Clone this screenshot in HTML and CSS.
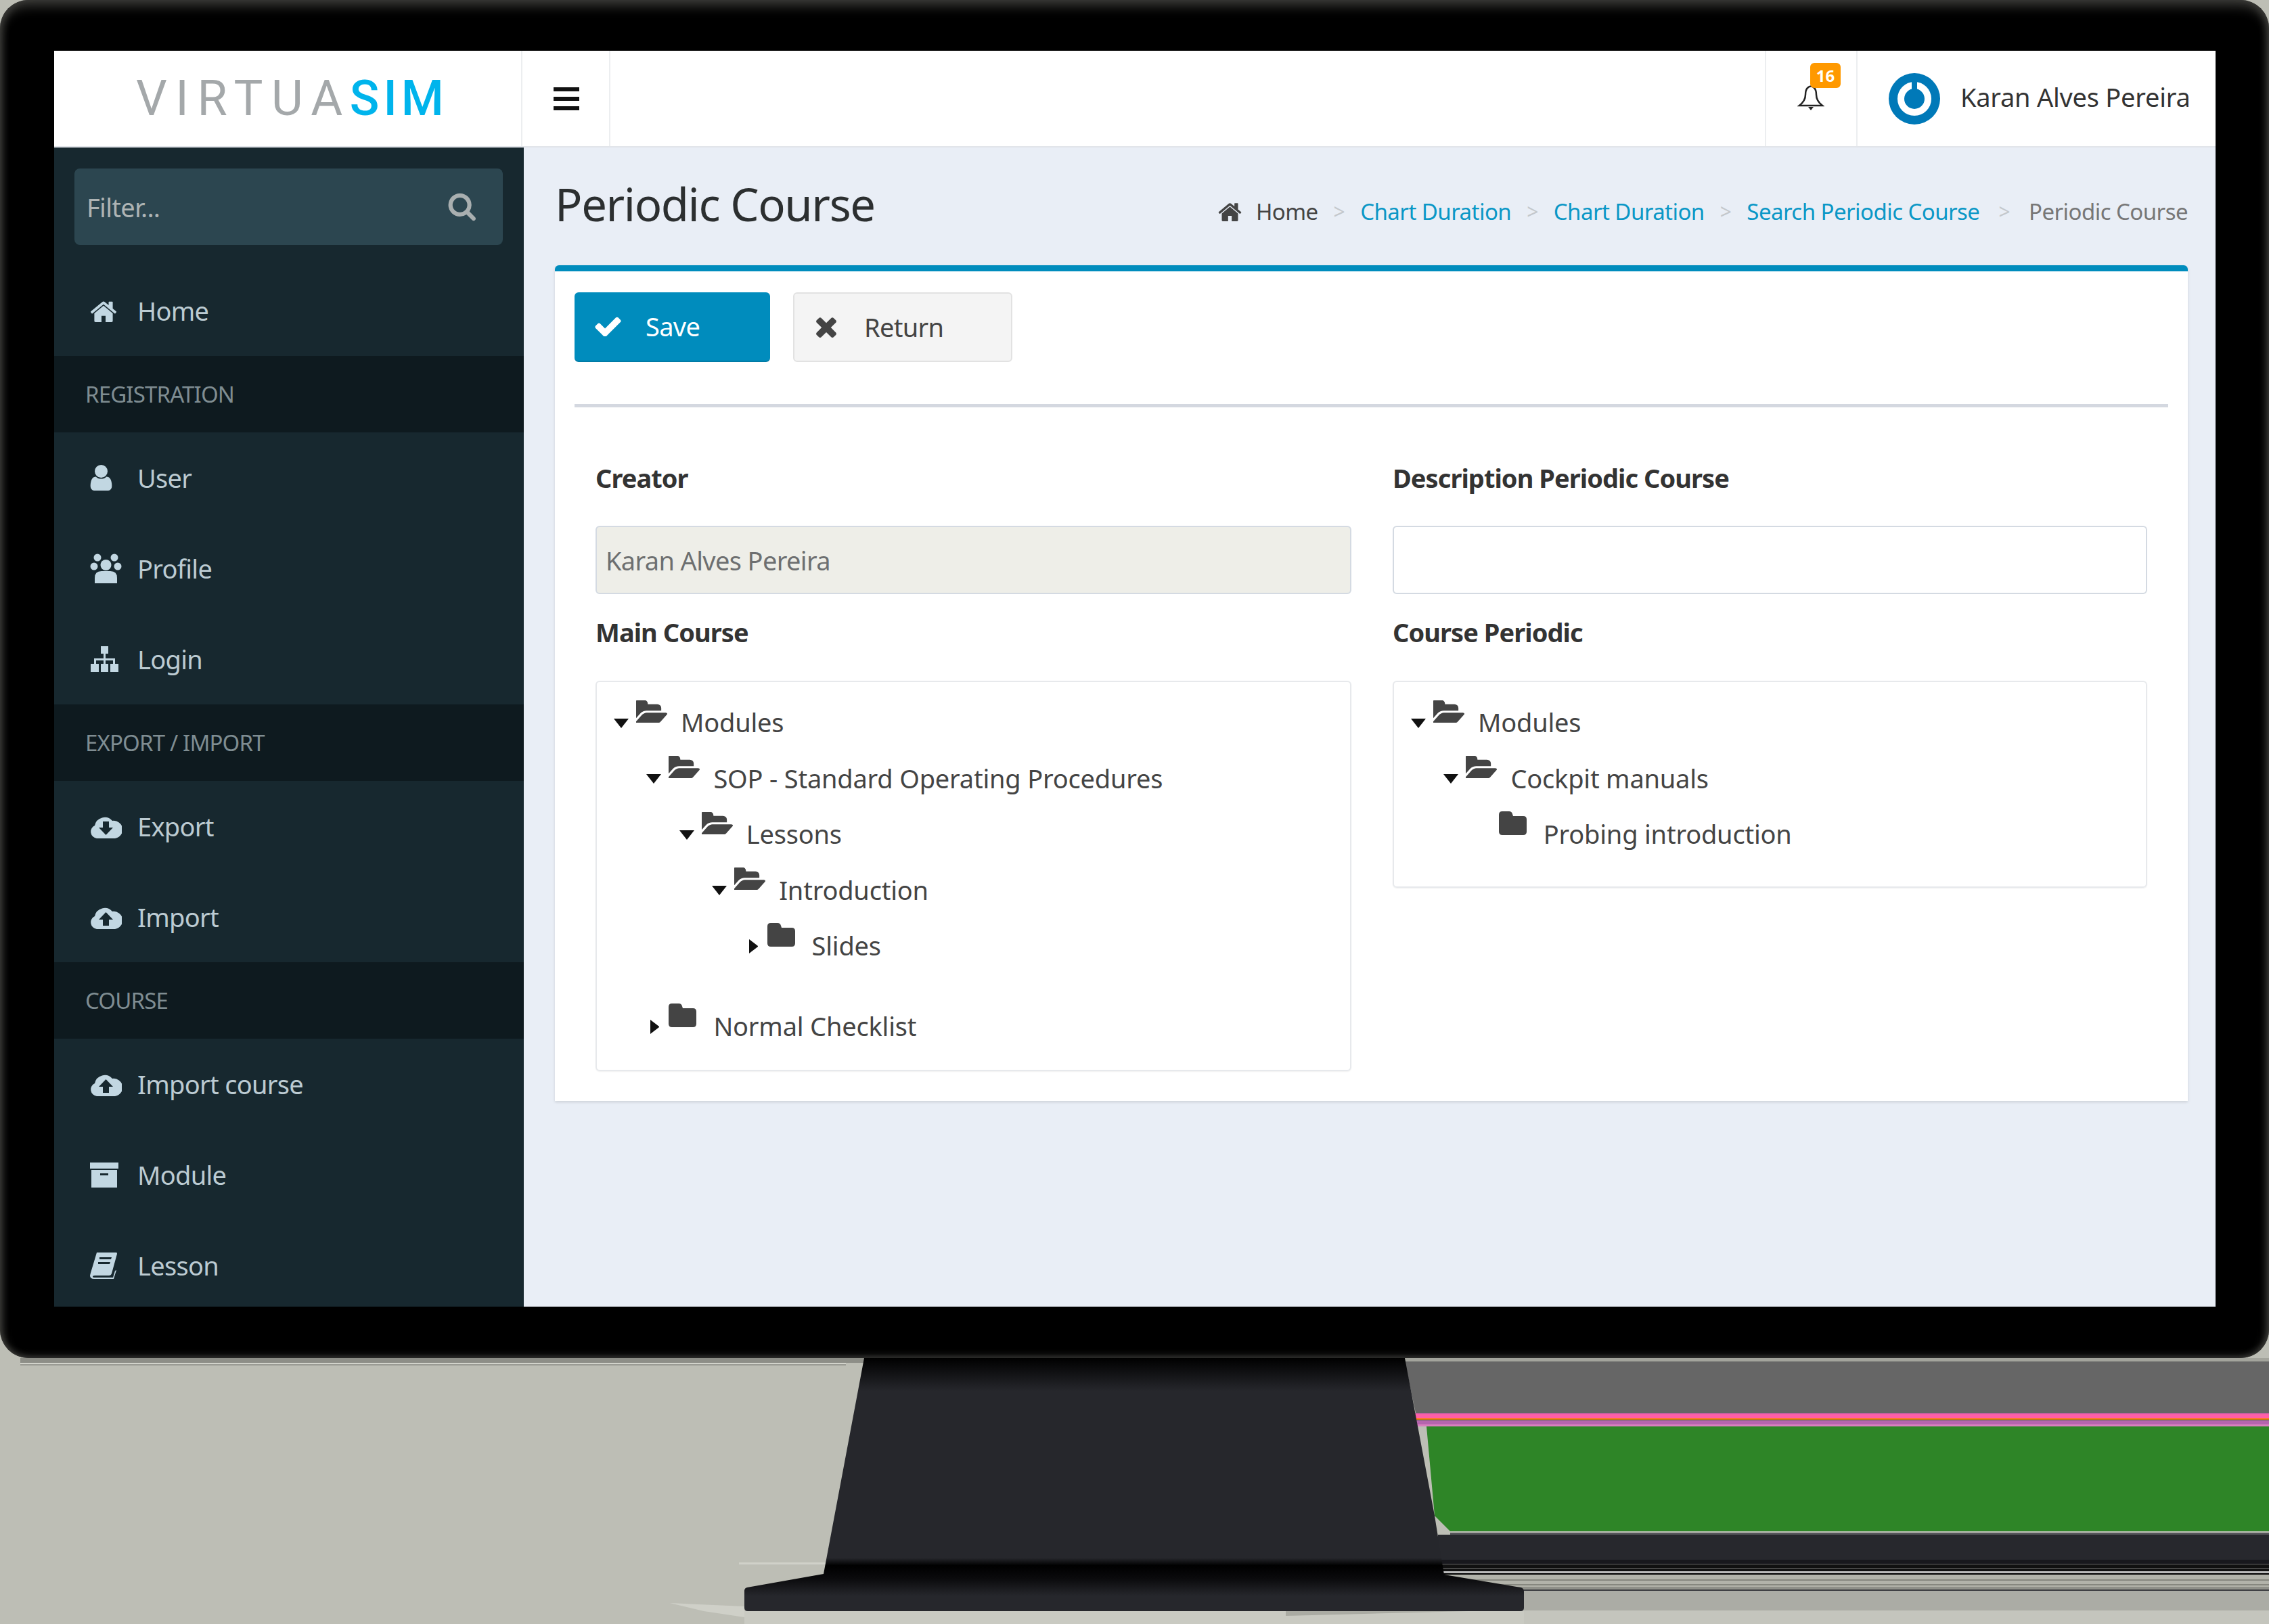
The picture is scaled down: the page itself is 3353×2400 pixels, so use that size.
FILE: index.html
```html
<!DOCTYPE html>
<html>
<head>
<meta charset="UTF-8">
<title>Periodic Course</title>
<link rel="stylesheet" href="styles.css">
</head>
<body>
<svg class="defs" width="0" height="0">
  <symbol id="i-home" viewBox="64 100 1664 1440"><path d="M1472 992v480q0 26-19 45t-45 19h-384v-384h-256v384h-384q-26 0-45-19t-19-45v-480q0-1 .5-3t.5-3l575-474 575 474q1 2 1 6zm223-69l-62 74q-8 9-21 11h-3q-13 0-21-7l-692-577-692 577q-12 8-24 7-13-2-21-11l-62-74q-8-10-7-23.5t11-21.5l719-599q32-26 76-26t76 26l244 204v-195q0-14 9-23t23-9h192q14 0 23 9t9 23v408l219 182q10 8 11 21.5t-7 23.5z"/></symbol>
  <symbol id="i-user" viewBox="256 128 1280 1536"><path d="M1536 1399q0 109-62.5 187t-150.5 78h-854q-88 0-150.5-78t-62.5-187q0-85 8.5-160.5t31.5-152 58.5-131 94-89 134.5-34.5q131 128 313 128t313-128q76 0 134.5 34.5t94 89 58.5 131 31.5 152 8.5 160.5zm-256-887q0 159-112.5 271.5t-271.5 112.5-271.5-112.5-112.5-271.5 112.5-271.5 271.5-112.5 271.5 112.5 112.5 271.5z"/></symbol>
  <symbol id="i-search" viewBox="0 128 1728 1664"><path d="M1216 832q0-185-131.5-316.5t-316.5-131.5-316.5 131.5-131.5 316.5 131.5 316.5 316.5 131.5 316.5-131.5 131.5-316.5zm512 832q0 52-38 90t-90 38q-54 0-90-38l-343-342q-179 124-399 124-143 0-273.5-55.5t-225-150-150-225-55.5-273.5 55.5-273.5 150-225 225-150 273.5-55.5 273.5 55.5 225 150 150 225 55.5 273.5q0 220-124 399l343 343q37 37 37 90z"/></symbol>
  <symbol id="i-check" viewBox="121 266 1550 1220"><path d="M1671 566q0 40-28 68l-724 724-136 136q-28 28-68 28t-68-28l-136-136-362-362q-28-28-28-68t28-68l136-136q28-28 68-28t68 28l294 295 656-657q28-28 68-28t68 28l136 136q28 28 28 68z"/></symbol>
  <symbol id="i-times" viewBox="302 238 1188 1316"><path d="M1490 1322q0 40-28 68l-136 136q-28 28-68 28t-68-28l-294-294-294 294q-28 28-68 28t-68-28l-136-136q-28-28-28-68t28-68l294-294-294-294q-28-28-28-68t28-68l136-136q28-28 68-28t68 28l294 294 294-294q28-28 68-28t68 28l136 136q28 28 28 68t-28 68l-294 294 294 294q28 28 28 68z"/></symbol>
  <symbol id="i-open" viewBox="64 128 1781 1344" preserveAspectRatio="none"><path d="M1845 931q0 35-35 74l-336 396q-43 51-120.5 86.5t-143.5 35.5h-1088q-34 0-60.5-13t-26.5-43q0-35 35-74l336-396q43-51 120.5-86.5t143.5-35.5h1088q34 0 60.5 13t26.5 43zm-343-345v160h-832q-94 0-197 47.5t-164 119.5l-337 396-5 6q0-4-.5-12.5t-.5-12.5v-960q0-92 66-158t158-66h320q92 0 158 66t66 158v32h544q92 0 158 66t66 158z"/></symbol>
  <symbol id="i-closed" viewBox="0 0 41 35"><path d="M5 0h10q4 0 5 4l1 3h15q5 0 5 5v18q0 5-5 5H5q-5 0-5-5V5q0-5 5-5z"/></symbol>
  <symbol id="i-group" viewBox="0 0 47 44"><circle cx="11" cy="6" r="5.5"/><circle cx="36" cy="6" r="5.5"/><circle cx="6" cy="19" r="5.5"/><circle cx="41" cy="19" r="5.5"/><circle cx="23.500" cy="17" r="8"/><path d="M7 44V36q0-10 10-10h13q10 0 10 10v8z"/></symbol>
  <symbol id="i-sitemap" viewBox="0 0 43 38"><path d="M16 0h11v11h-11zM20 11h3v7h14v8h-3v-5H23v5h-3v-5H9v5H6v-8h14zM1 26h12v12H1zM16 26h11v12H16zM30 26h12v12H30z"/></symbol>
  <symbol id="i-down" viewBox="0 0 47 35"><path fill-rule="evenodd" d="M10 35a10 10 0 0 1-3-19A15 15 0 0 1 33 9a11 11 0 0 1 4 26zM19 10v9h-6l10.500 11L34 19h-6v-9z"/></symbol>
  <symbol id="i-up" viewBox="0 0 47 35"><path fill-rule="evenodd" d="M10 35a10 10 0 0 1-3-19A15 15 0 0 1 33 9a11 11 0 0 1 4 26zM19 30v-9h-6L23.500 10 34 21h-6v9z"/></symbol>
  <symbol id="i-box" viewBox="0 0 42 37"><path fill-rule="evenodd" d="M0 0h42v9H0zM2 11h38v26H2zM15 16v3h12v-3z"/></symbol>
  <symbol id="i-book" viewBox="0 0 40 39"><path fill-rule="evenodd" d="M10 0h29q1 0 1 2l-8 29q-1 3-4 3H7q-3 0-3 1.500T7 37h27l3-10 2-1-4 13H6q-6 0-6-5l1-4zM14 7v3h17l1-3zM12 14v3h17l1-3z"/></symbol>
</svg>

<div class="monitor">
  <div class="screen">
    <header class="topbar">
      <div class="brand"><span class="logo-a">VIRTUA</span><span class="logo-b">SIM</span></div>
      <div class="toggle"><i></i><i></i><i></i></div>
      <div class="topbar-fill"></div>
      <div class="bell">
        <svg class="bell-ico" viewBox="0 0 40 40"><path d="M15 7q5-5 10 0 3 3 3 10 0 9 9 16H3q9-7 9-16 0-7 3-10z" fill="none" stroke="#222" stroke-width="2.500"/><path d="M16 35h8l-4 5z" fill="#222"/></svg>
        <span class="badge">16</span>
      </div>
      <div class="user">
        <svg class="avatar" viewBox="0 0 76 76"><circle cx="38" cy="38" r="38" fill="#0079b8"/><circle cx="38" cy="38" r="20" fill="none" stroke="#fff" stroke-width="10"/><rect x="34" y="10" width="8" height="28" fill="#0079b8"/></svg>
        <span class="user-name">Karan Alves Pereira</span>
      </div>
    </header>
    <div class="body">
      <nav class="sidebar">
        <div class="filter-wrap">
          <div class="filter">
            <input class="filter-input" placeholder="Filter...">
            <svg class="filter-ico"><use href="#i-search"/></svg>
          </div>
        </div>
        <a class="nav-item"><span class="nav-ico"><svg class="ico-home"><use href="#i-home"/></svg></span>Home</a>
        <div class="nav-head">REGISTRATION</div>
        <a class="nav-item"><span class="nav-ico"><svg class="ico-user"><use href="#i-user"/></svg></span>User</a>
        <a class="nav-item"><span class="nav-ico"><svg class="ico-group"><use href="#i-group"/></svg></span>Profile</a>
        <a class="nav-item"><span class="nav-ico"><svg class="ico-site"><use href="#i-sitemap"/></svg></span>Login</a>
        <div class="nav-head">EXPORT / IMPORT</div>
        <a class="nav-item"><span class="nav-ico"><svg class="ico-cloud"><use href="#i-down"/></svg></span>Export</a>
        <a class="nav-item"><span class="nav-ico"><svg class="ico-cloud"><use href="#i-up"/></svg></span>Import</a>
        <div class="nav-head">COURSE</div>
        <a class="nav-item"><span class="nav-ico"><svg class="ico-cloud"><use href="#i-up"/></svg></span>Import course</a>
        <a class="nav-item"><span class="nav-ico"><svg class="ico-box"><use href="#i-box"/></svg></span>Module</a>
        <a class="nav-item"><span class="nav-ico"><svg class="ico-book"><use href="#i-book"/></svg></span>Lesson</a>
      </nav>
      <main class="content">
        <div class="page-head">
          <h1 class="title">Periodic Course</h1>
          <ol class="crumbs">
            <li class="crumb-home"><svg class="crumb-ico"><use href="#i-home"/></svg>Home</li>
            <li class="sep">&gt;</li>
            <li class="link">Chart Duration</li>
            <li class="sep">&gt;</li>
            <li class="link">Chart Duration</li>
            <li class="sep">&gt;</li>
            <li class="link">Search Periodic Course</li>
            <li class="sep sep-last">&gt;</li>
            <li class="crumb-last">Periodic Course</li>
          </ol>
        </div>
        <section class="card">
          <div class="toolbar">
            <button class="btn btn-save"><svg class="btn-ico"><use href="#i-check"/></svg>Save</button>
            <button class="btn btn-return"><svg class="btn-ico-x"><use href="#i-times"/></svg>Return</button>
          </div>
          <div class="divider"></div>
          <div class="form">
            <div class="col">
              <label class="label">Creator</label>
              <input class="field field-off" value="Karan Alves Pereira" readonly>
              <label class="label label-2">Main Course</label>
              <div class="tree">
                <ul>
                  <li><div class="row"><span class="caret-down"></span><svg class="fold"><use href="#i-open"/></svg>Modules</div>
                    <ul>
                      <li><div class="row"><span class="caret-down"></span><svg class="fold"><use href="#i-open"/></svg>SOP - Standard Operating Procedures</div>
                        <ul>
                          <li><div class="row"><span class="caret-down"></span><svg class="fold"><use href="#i-open"/></svg>Lessons</div>
                            <ul>
                              <li><div class="row"><span class="caret-down"></span><svg class="fold"><use href="#i-open"/></svg>Introduction</div>
                                <ul>
                                  <li><div class="row"><span class="caret-right"></span><svg class="fold-shut"><use href="#i-closed"/></svg>Slides</div></li>
                                </ul>
                              </li>
                            </ul>
                          </li>
                        </ul>
                      </li>
                      <li class="gap"><div class="row"><span class="caret-right"></span><svg class="fold-shut"><use href="#i-closed"/></svg>Normal Checklist</div></li>
                    </ul>
                  </li>
                </ul>
              </div>
            </div>
            <div class="col">
              <label class="label">Description Periodic Course</label>
              <input class="field">
              <label class="label label-2">Course Periodic</label>
              <div class="tree tree-short">
                <ul>
                  <li><div class="row"><span class="caret-down"></span><svg class="fold"><use href="#i-open"/></svg>Modules</div>
                    <ul>
                      <li><div class="row"><span class="caret-down"></span><svg class="fold"><use href="#i-open"/></svg>Cockpit manuals</div>
                        <ul>
                          <li><div class="row"><span class="caret-none"></span><svg class="fold-shut"><use href="#i-closed"/></svg>Probing introduction</div></li>
                        </ul>
                      </li>
                    </ul>
                  </li>
                </ul>
              </div>
            </div>
          </div>
        </section>
      </main>
    </div>
  </div>
</div>

<svg class="stand" viewBox="0 2007 3353 393" preserveAspectRatio="none">
  <defs>
    <linearGradient id="neck" gradientUnits="userSpaceOnUse" x1="0" y1="2007" x2="0" y2="2381">
      <stop offset="0" stop-color="#000"/>
      <stop offset=".13" stop-color="#26272c"/>
      <stop offset=".79" stop-color="#26272c"/>
      <stop offset=".82" stop-color="#000"/>
      <stop offset=".87" stop-color="#0a0a0c"/>
      <stop offset=".94" stop-color="#26272c"/>
      <stop offset="1" stop-color="#26272c"/>
    </linearGradient>
  </defs>
  <!-- shelf lines under the bezel, left side -->
  <rect x="30" y="2007" width="1250" height="7" fill="#8d8e87"/>
  <rect x="30" y="2014" width="1220" height="2" fill="#d2d3cb"/>
  <rect x="30" y="2016" width="1220" height="2" fill="#9a9b94"/>
  <rect x="1092" y="2309" width="130" height="3" fill="#d0d1c9"/>
  <path d="M990 2369L1100 2374V2390L1040 2381z" fill="#cfd0c8"/>
  <!-- right side bands -->
  <rect x="2070" y="2007" width="1283" height="5" fill="#a3a49c"/>
  <path d="M2076 2012H3353V2088H2092z" fill="#666"/>
  <rect x="2090" y="2088" width="1263" height="2" fill="#c75fa0"/>
  <rect x="2090" y="2090" width="1263" height="6" fill="#ff5fa8"/>
  <rect x="2090" y="2096" width="1263" height="2" fill="#ff7a10"/>
  <rect x="2090" y="2098" width="1263" height="1" fill="#2c6d22"/>
  <rect x="2090" y="2099" width="1263" height="6" fill="#b565ae"/>
  <rect x="2090" y="2105" width="1263" height="3" fill="#d97fc0"/>
  <path d="M2108 2108H3353V2263H2143L2120 2240z" fill="#2e8527"/>
  <rect x="2143" y="2263" width="1210" height="2" fill="#c2c3ba"/>
  <rect x="2143" y="2265" width="1210" height="3" fill="#55565a"/>
  <rect x="2125" y="2268" width="1228" height="37" fill="#27282d"/>
  <rect x="2125" y="2305" width="1228" height="6" fill="#18181d"/>
  <rect x="2125" y="2311" width="1228" height="1" fill="#666"/>
  <rect x="2125" y="2312" width="1228" height="5" fill="#111"/>
  <rect x="2125" y="2317" width="1228" height="1" fill="#777"/>
  <rect x="2125" y="2318" width="1228" height="4" fill="#111"/>
  <rect x="2125" y="2322" width="1228" height="3" fill="#bbb"/>
  <rect x="2125" y="2325" width="1228" height="2" fill="#000"/>
  <rect x="2125" y="2327" width="1228" height="18" fill="#b2b3aa"/>
  <rect x="2125" y="2334" width="1228" height="2" fill="#86877f"/>
  <rect x="2125" y="2341" width="1228" height="2" fill="#86877f"/>
  <rect x="2125" y="2345" width="1228" height="4" fill="#8f9089"/>
  <rect x="2125" y="2349" width="1228" height="2" fill="#3f4044"/>
  <rect x="2125" y="2351" width="1228" height="29" fill="#abaca5"/>
  <rect x="2125" y="2380" width="1228" height="20" fill="#c4c5bd"/>
  <!-- under the foot -->
  <rect x="1100" y="2381" width="1152" height="19" fill="#c9cac2"/>
  <path d="M1900 2381H2170L1900 2388z" fill="#aaaba3"/>
  <!-- neck and foot -->
  <path d="M1277 2007H2076L2120 2240L2134 2327L2247 2346Q2252 2347 2252 2352V2376Q2252 2381 2247 2381H1105Q1100 2381 1100 2376V2351Q1100 2347 1104 2346L1217 2326z" fill="url(#neck)"/>
</svg>
</body>
</html>
```
FILE: styles.css
```css
*{margin:0;padding:0;box-sizing:border-box}
html,body{width:3353px;height:2400px;overflow:hidden}
body{background:#bdbeb5;font-family:"Noto Sans",sans-serif;color:#333;font-size:38px}
ul,ol{list-style:none}
.defs{display:block;height:0}
svg{fill:currentColor;display:block;flex:none}

.monitor{width:3353px;height:2007px;background:#000;border-radius:42px;padding:75px 79px 76px 80px;box-shadow:inset 0 14px 18px -6px #3d3d3a,inset 10px 0 14px -8px #4a4a46,inset -10px 0 14px -8px #4a4a46,inset 0 -8px 12px -6px #3d3d3a}
.screen{height:100%;display:flex;flex-direction:column;overflow:hidden;background:#e9eef6}
.stand{display:block;width:3353px;height:393px}

/* top bar */
.topbar{height:143px;background:#fff;display:flex;flex:none;border-bottom:2px solid #e2e5ea}
.brand{width:692px;border-right:2px solid #eceef0;display:flex;align-items:center;padding-left:121px;font-family:Roboto,sans-serif;font-size:72px;line-height:1}
.logo-a{color:#a4a8aa;font-weight:400;letter-spacing:12.500px}
.logo-b{color:#00b4ec;font-weight:500;letter-spacing:6px;margin-left:-2px}
.toggle{width:130px;border-right:2px solid #eceef0;display:flex;flex-direction:column;justify-content:center;gap:8px;padding-left:46px}
.toggle i{display:block;width:38px;height:6px;background:#111}
.topbar-fill{flex:1}
.bell{width:135px;border-left:2px solid #eceef0;position:relative;padding:48px 0 0 46px}
.bell-ico{width:40px;height:40px;fill:none}
.badge{position:absolute;left:65px;top:18px;width:45px;height:37px;background:#f90;color:#fff;font-size:24px;font-weight:700;border-radius:6px;text-align:center;line-height:37px}
.user{width:531px;border-left:2px solid #eceef0;display:flex;align-items:center;padding-left:46px;gap:30px;font-size:38px;letter-spacing:-.25px;color:#333}
.user-name{margin-top:-6px}
.avatar{width:76px;height:76px}

.body{flex:1;display:flex;min-height:0}

/* sidebar */
.sidebar{width:694px;flex:none;background:#17282f;color:#bccbd2;font-size:38px;letter-spacing:-.7px}
.filter-wrap{height:174px;padding:31px 31px 0 30px}
.filter{height:113px;background:#2c4650;border-radius:8px;display:flex;align-items:center;padding:0 40px 0 18px}
.filter-input{flex:1;min-width:0;background:none;border:0;outline:0;font:38px "Noto Sans",sans-serif;letter-spacing:-.7px;color:#aeb4b4}
.filter-input::placeholder{color:#aeb4b4;opacity:1}
.filter-ico{width:42px;height:42px;color:#a9afb0}
.nav-item{height:134px;display:flex;align-items:center;padding-left:53px}
.nav-ico{width:70px;display:flex;align-items:center;color:#c2d7e2}
.nav-head{height:113px;background:#0e1a1f;color:#7f8d92;font-size:33px;letter-spacing:-.85px;display:flex;align-items:center;padding-left:46px}
.ico-home{width:40px;height:34px}
.ico-user{width:33px;height:38px}
.ico-group{width:47px;height:44px}
.ico-site{width:43px;height:38px}
.ico-cloud{width:47px;height:35px}
.ico-box{width:42px;height:37px}
.ico-book{width:40px;height:39px}

/* content */
.content{flex:1;padding:0 41px 0 46px;min-width:0}
.page-head{height:174px;display:flex;justify-content:space-between;align-items:center}
.title{font-size:67px;font-weight:400;color:#2c2f30;letter-spacing:-1.400px;margin-top:2px;margin-bottom:10px}
.crumbs{display:flex;align-items:center;font-size:33px;letter-spacing:-.55px;margin-top:28px;margin-bottom:14px}
.crumb-home{display:flex;align-items:center;color:#444;gap:21px}
.crumb-ico{width:35px;height:30px}
.sep{color:#c4c8cc;margin:0 23px;font-size:30px}
.sep-last{margin:0 28px}
.link{color:#0a97c6}
.crumb-last{color:#777}

.card{background:#fff;border-top:9px solid #008cbd;border-radius:6px 6px 0 0;box-shadow:0 2px 4px rgba(0,0,0,.12);padding-bottom:44px}
.toolbar{padding:31px 29px 0;display:flex;gap:34px}
.btn{height:103px;border-radius:6px;font:38px "Noto Sans",sans-serif;letter-spacing:-.7px;display:flex;align-items:center;padding-bottom:2px}
.btn-save{width:289px;background:#008cbd;border:0;border-bottom:2px solid #007ba6;color:#fff;padding-left:30px;gap:36px}
.btn-return{width:324px;background:#f4f4f4;border:2px solid #e2e2e2;color:#444;padding-left:32px;gap:41px}
.btn-ico{width:39px;height:30px}
.btn-ico-x{width:30px;height:33px}
.divider{height:5px;background:#d4d8e0;margin:62px 29px 0}
.form{display:grid;grid-template-columns:1117px 1115px;column-gap:61px;padding:0 60px 0 60px;align-items:start}
.col{display:flex;flex-direction:column}
.label{height:60px;margin-top:74px;font-size:38px;font-weight:700;letter-spacing:-.95px;color:#333;line-height:60px}
.label-2{margin-top:26px}
.field{height:101px;margin-top:41px;border:2px solid #d4dae2;border-radius:6px;background:#fff;font:38px "Noto Sans",sans-serif;letter-spacing:-.65px;padding:0 13px;outline:0;color:#6d6f70}
.field-off{background:#eeeee8}

/* tree */
.tree{margin-top:42px;height:577px;border:2px solid #e7e9ec;border-radius:6px;padding:18px 0 0 25px;box-shadow:0 1px 2px rgba(0,0,0,.06);font-size:38px;letter-spacing:-.2px;color:#444}
.tree-short{height:306px}
.tree ul ul{padding-left:48.400px}
.row{height:82.500px;display:flex;align-items:center;white-space:nowrap}
.gap{margin-top:36.500px}
.caret-down,.caret-right,.caret-none{flex:none}
.caret-none{width:33px}
.caret-down{width:22px;height:14px;margin-right:11px;border-top:14px solid #111;border-left:11px solid transparent;border-right:11px solid transparent;margin-top:3px}
.caret-right{width:13px;height:21px;margin-left:6px;margin-right:14px;border-top:10.500px solid transparent;border-bottom:10.500px solid transparent;border-left:13px solid #111;margin-top:3px}
.fold{width:46px;height:33px;margin:-32px 20px 0 0;fill:#444}
.fold-shut{width:41px;height:35px;margin:-32px 25px 0 0;fill:#444}
```
